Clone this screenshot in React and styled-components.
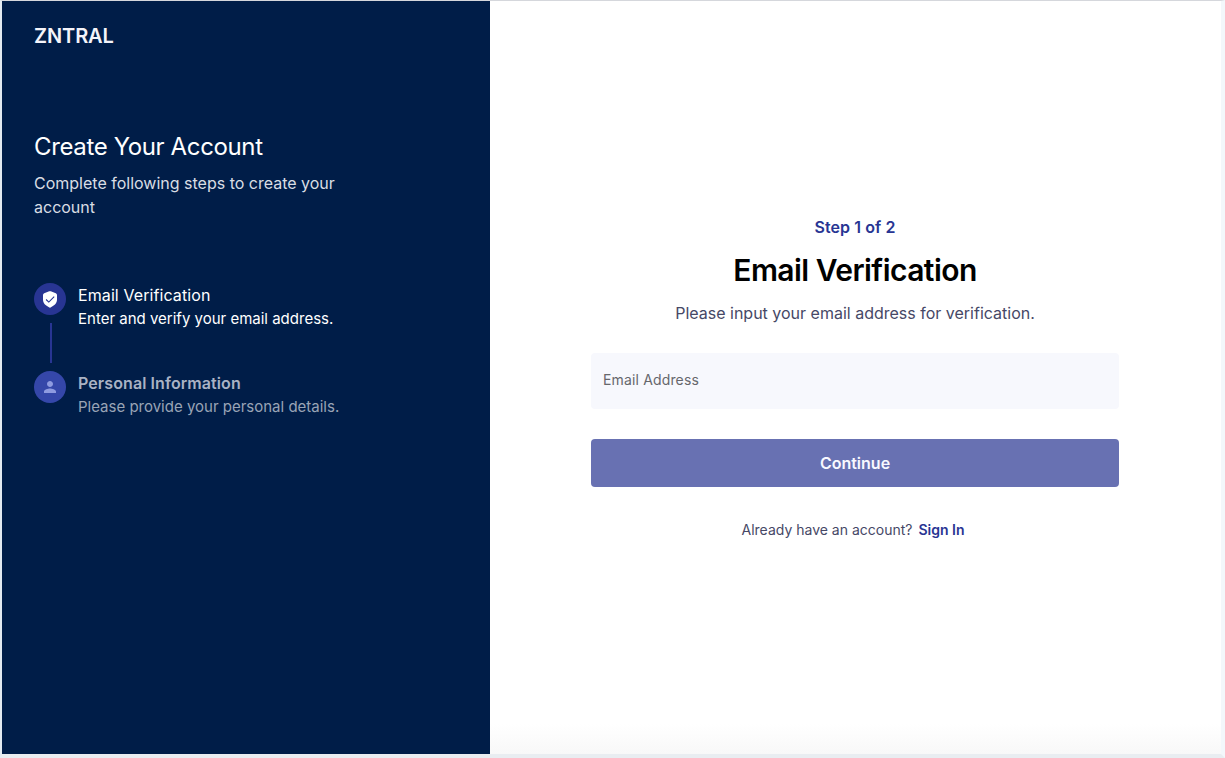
import React from "react";
import styled, { createGlobalStyle } from "styled-components";
import { MdPerson } from "react-icons/md";

const GlobalStyle = createGlobalStyle`
  * { box-sizing: border-box; }
  body { margin: 0; font-family: Inter, "Liberation Sans", sans-serif; }
  h1, h2, p { margin: 0; }
`;

const Page = styled.div`
  display: flex;
  width: 100%;
  height: 100vh;
  overflow: hidden;
  border-style: solid;
  border-width: 1px 4px 4px 2px;
  border-color: #d5d7dc #f3f7fb #e9edf1 #e3eaf1;
`;

const Sidebar = styled.aside`
  width: 488px;
  flex: none;
  padding: 20px 32px;
  background: #001d48;
  color: #fff;
`;

const Brand = styled.div`
  font-size: 20px;
  line-height: 30px;
  font-weight: 600;
  letter-spacing: -0.1px;
  color: #f4f4fa;
`;

const Intro = styled.div`
  width: 320px;
  margin-top: 78px;
`;

const IntroTitle = styled.h1`
  font-size: 24px;
  line-height: 36px;
  font-weight: 400;
  letter-spacing: -0.37px;
`;

const IntroText = styled.p`
  margin-top: 6px;
  font-size: 16px;
  line-height: 24px;
  color: #d9dde4;
`;

const Steps = styled.div`
  margin-top: 64px;
`;

const Step = styled.div`
  display: flex;
  gap: 12px;
  height: 88px;
`;

const Rail = styled.div`
  display: flex;
  flex-direction: column;
  align-items: center;
  width: 32px;
`;

const Badge = styled.div`
  display: flex;
  align-items: center;
  justify-content: center;
  width: 32px;
  height: 32px;
  border-radius: 50%;
  background: ${(p) => (p.$active ? "#283593" : "#3547a9")};
  color: #8f9be0;
`;

const Connector = styled.div`
  width: 2px;
  height: 40px;
  margin: 8px 0 0 2px;
  background: #283593;
`;

const StepTitle = styled.div`
  font-size: 16px;
  line-height: 24px;
  font-weight: ${(p) => (p.$active ? 400 : 600)};
  letter-spacing: 0.09px;
  color: ${(p) => (p.$active ? "#fff" : "#a9b2c4")};
`;

const StepText = styled.div`
  font-size: 15px;
  line-height: 23px;
  color: ${(p) => (p.$active ? "#fff" : "#99a4b6")};
`;

const Main = styled.main`
  flex: 1;
  display: flex;
  justify-content: center;
  padding: 214px 1px 0 0;
  background: linear-gradient(#fff 96%, #f8f8f8);
`;

const Form = styled.form`
  display: flex;
  flex-direction: column;
  align-items: center;
  width: 528px;
`;

const StepCount = styled.p`
  font-size: 16px;
  line-height: 24px;
  font-weight: 600;
  letter-spacing: 0.1px;
  color: #283593;
`;

const Heading = styled.h2`
  margin-top: 9px;
  font-size: 30px;
  line-height: 44px;
  font-weight: 600;
  letter-spacing: -0.55px;
  color: #000;
`;

const Hint = styled.p`
  margin-top: 9px;
  font-size: 16px;
  line-height: 24px;
  color: #464866;
`;

const Field = styled.input`
  width: 100%;
  height: 56px;
  margin-top: 28px;
  padding: 0 12px 4px;
  border: 0;
  border-radius: 4px;
  background: #f7f8fd;
  font: 400 14px Inter, sans-serif;
  letter-spacing: 0.15px;
  &::placeholder { color: #66676c; opacity: 1; }
`;

const Submit = styled.button`
  width: 100%;
  height: 48px;
  margin-top: 30px;
  border: 0;
  border-radius: 4px;
  background: #6871b2;
  color: #f8f8ff;
  font: 600 16px Inter, sans-serif;
`;

const Account = styled.div`
  display: flex;
  gap: 6px;
  margin: 33px 4px 0 0;
  font-size: 14px;
  line-height: 20px;
  color: #464866;
`;

const SignIn = styled.a`
  font-weight: 600;
  color: #283593;
`;

function ShieldCheck() {
  return (
    <svg width="14" height="17" viewBox="0 0 14 17">
      <path d="M6.2.35Q7 .05 7.8.35L12.8 2.2Q14 2.7 14 3.9V8.6C14 12.7 10.8 15 7.6 16.5Q7 16.75 6.4 16.5C3.2 15 0 12.7 0 8.6V3.9Q0 2.7 1.2 2.2Z" fill="#fff" />
      <path d="M3.1 8.5 5.8 11.1 11.2 5.7" fill="none" stroke="#283593" strokeWidth="1.1" />
    </svg>
  );
}

export default function App() {
  return (
    <>
      <GlobalStyle />
      <Page>
        <Sidebar>
          <Brand>ZNTRAL</Brand>
          <Intro>
            <IntroTitle>Create Your Account</IntroTitle>
            <IntroText>Complete following steps to create your account</IntroText>
          </Intro>
          <Steps>
            <Step>
              <Rail>
                <Badge $active><ShieldCheck /></Badge>
                <Connector />
              </Rail>
              <div>
                <StepTitle $active>Email Verification</StepTitle>
                <StepText $active>Enter and verify your email address.</StepText>
              </div>
            </Step>
            <Step>
              <Rail>
                <Badge><MdPerson size={18} /></Badge>
              </Rail>
              <div>
                <StepTitle>Personal Information</StepTitle>
                <StepText>Please provide your personal details.</StepText>
              </div>
            </Step>
          </Steps>
        </Sidebar>
        <Main>
          <Form>
            <StepCount>Step 1 of 2</StepCount>
            <Heading>Email Verification</Heading>
            <Hint>Please input your email address for verification.</Hint>
            <Field type="email" placeholder="Email Address" />
            <Submit type="button">Continue</Submit>
            <Account>
              <span>Already have an account?</span>
              <SignIn>Sign In</SignIn>
            </Account>
          </Form>
        </Main>
      </Page>
    </>
  );
}
